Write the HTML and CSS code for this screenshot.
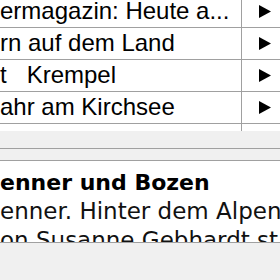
FILE: index.html
```html
<!DOCTYPE html>
<html lang="de">
<head>
  <meta charset="UTF-8" />
  <title>Sendungen</title>
  <link rel="stylesheet" href="styles.css">
</head>
<body>
  <div class="list">
    <div class="rows">
      <div class="row">
        <div class="title">ermagazin: Heute a...</div>
        <div class="play"><svg width="12" height="13" viewBox="0 0 12 13"><polygon points="0,0 12,6.5 0,13" /></svg></div>
      </div>
      <div class="row">
        <div class="title">rn auf dem Land</div>
        <div class="play"><svg width="12" height="13" viewBox="0 0 12 13"><polygon points="0,0 12,6.5 0,13" /></svg></div>
      </div>
      <div class="row">
        <div class="title">t   Krempel</div>
        <div class="play"><svg width="12" height="13" viewBox="0 0 12 13"><polygon points="0,0 12,6.5 0,13" /></svg></div>
      </div>
      <div class="row">
        <div class="title">ahr am Kirchsee</div>
        <div class="play"><svg width="12" height="13" viewBox="0 0 12 13"><polygon points="0,0 12,6.5 0,13" /></svg></div>
      </div>
      <div class="row">
        <div class="title"></div>
        <div class="play"></div>
      </div>
    </div>
  </div>
  <div class="toolbar"></div>
  <div class="toolbar-low"></div>
  <div class="detail">
    <h2>enner und Bozen</h2>
    <p>enner. Hinter dem Alpen<br>on Susanne Gebhardt st</p>
  </div>
</body>
</html>
```

FILE: styles.css
```css
body {
  margin: 0;
  background: #f0f0f0;
  overflow: hidden;
}
.list {
  height: 131px;
  background: #fff;
  overflow: hidden;
}
.rows {
  margin-top: -4px;
}
.row {
  display: flex;
  height: 32px;
  box-sizing: border-box;
  border-bottom: 1px solid #a0a0a0;
}
.title {
  width: 242px;
  box-sizing: border-box;
  border-right: 1px solid #a0a0a0;
  padding-bottom: 2px;
  font-family: "Liberation Sans", Arial, sans-serif;
  font-size: 24px;
  line-height: 29px;
  color: #000;
  white-space: pre;
  overflow: hidden;
}
.play {
  padding: 9px 0 0 17px;
}
.play svg {
  display: block;
  fill: #000;
}
.toolbar {
  height: 17px;
  border-bottom: 1px solid #a0a0a0;
}
.toolbar-low {
  height: 11px;
  border-bottom: 1px solid #a0a0a0;
}
.detail {
  height: 82px;
  box-sizing: border-box;
  padding-top: 7px;
  background: #fff;
  border-bottom: 1px solid #a0a0a0;
  overflow: hidden;
  font-family: "DejaVu Sans", Verdana, sans-serif;
  font-size: 23px;
  line-height: 29px;
  color: #000;
  white-space: nowrap;
}
.detail h2 {
  margin: 0;
  font-size: 22px;
  font-weight: bold;
}
.detail p {
  margin: 0;
  color: #111;
}
```
